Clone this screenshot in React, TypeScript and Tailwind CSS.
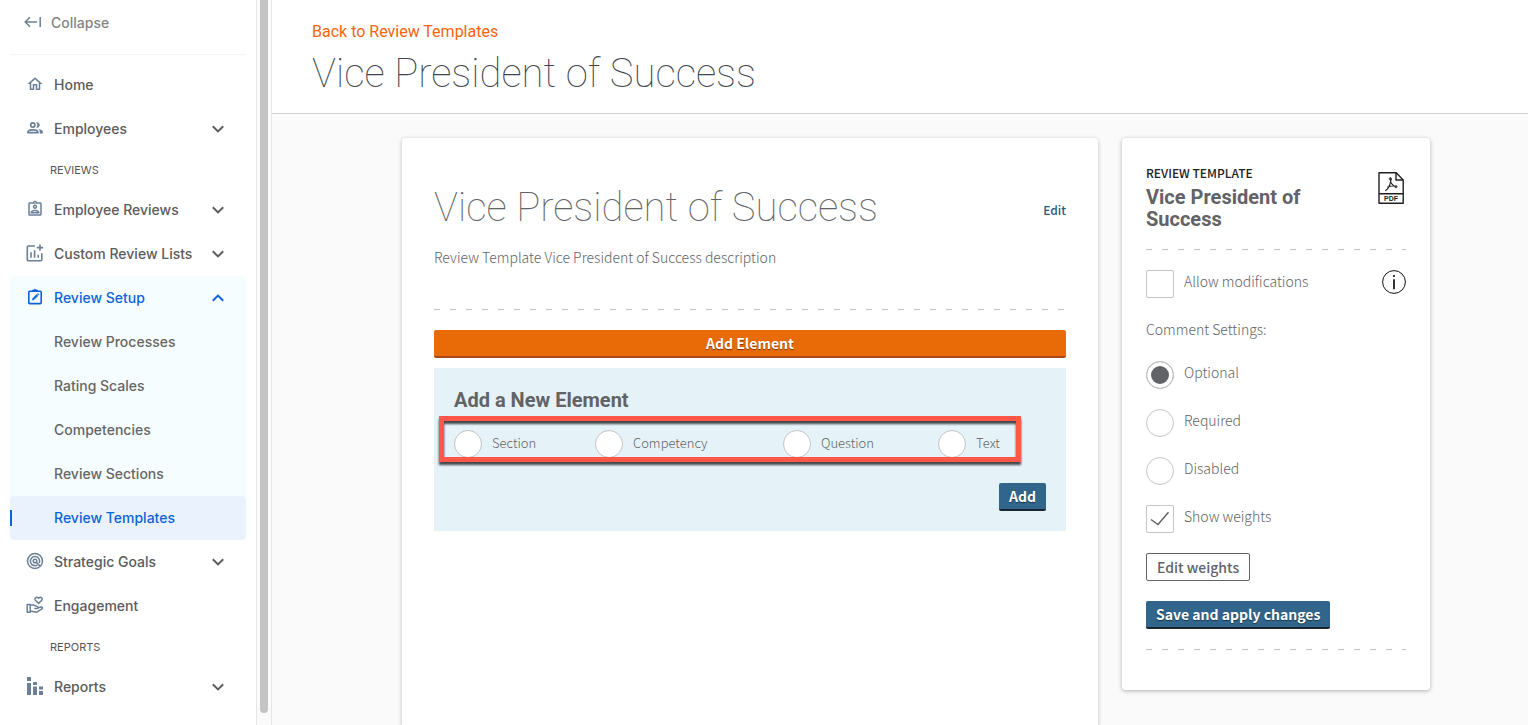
import { useState } from "react";
import type { ReactNode } from "react";
import { MdOutlineAssignmentInd, MdOutlineHome } from "react-icons/md";

const ELEMENT_TYPES = ["Section", "Competency", "Question", "Text"];
const COMMENT_SETTINGS = ["Optional", "Required", "Disabled"];
const SETUP_LINKS = [
  "Review Processes",
  "Rating Scales",
  "Competencies",
  "Review Sections",
  "Review Templates",
];

const CollapseIcon = () => (
  <svg width="18" height="12" viewBox="0 0 18 12" fill="none" stroke="currentColor" strokeWidth="1.5">
    <path d="M6 1.2 1.2 6 6 10.8M1.4 6H13M16.2 1v10" />
  </svg>
);

const PeopleIcon = () => (
  <svg width="18" height="18" viewBox="0 0 18 18" fill="none" stroke="currentColor" strokeWidth="1.7">
    <circle cx="6.800" cy="6" r="2.100" />
    <path d="M2 13.700v-.8c0-1.300 2.200-2.100 4.900-2.100s4.900.8 4.900 2.100v.8z" />
    <path
      d="M10 8.800a4 4 0 0 0 0-5.600c2.500-.4 3.700 1.200 3.700 2.800S12.500 9.200 10 8.800zM13.700 14.500v-1.800c0-1.200-.5-2.100-1.300-2.800 2.800.4 4.400 1.400 4.400 2.800v1.800z"
      fill="currentColor"
      stroke="none"
    />
  </svg>
);

const ChartPlusIcon = () => (
  <svg width="18" height="18" viewBox="0 0 18 18" fill="none" stroke="currentColor" strokeWidth="1.600">
    <path d="M9 2H2.300a1 1 0 0 0-1 1v12.700a1 1 0 0 0 1 1h12.500a1 1 0 0 0 1-1V9.200" />
    <path d="M14 .4v6.400M10.800 3.600h6.400M5 8.200v5.600M8.600 6.200v7.600M12.200 10.800v3" />
  </svg>
);

const ClipboardEditIcon = () => (
  <svg width="18" height="18" viewBox="0 0 18 18" fill="none" stroke="currentColor">
    <rect x="2.8" y="3.2" width="12.4" height="12.4" rx="0.8" strokeWidth="1.6" />
    <path d="M6.6 3V2h1.2a1.3 1.3 0 0 1 2.4 0h1.2v1" fill="currentColor" strokeWidth="0.8" />
    <path d="m6.4 12 .4-1.6 3.8-3.8 1.2 1.2L8 11.6z" fill="currentColor" strokeWidth="0.7" />
    <path d="m11.3 5.9.5-.5 1.2 1.2-.5.5z" fill="currentColor" strokeWidth="0.6" />
  </svg>
);

const TargetIcon = () => (
  <svg width="18" height="18" viewBox="0 0 18 18" fill="none" stroke="currentColor" strokeWidth="1.5">
    <circle cx="9" cy="9" r="7.5" />
    <path d="M11.4 13a4.6 4.6 0 1 1 1.8-2" />
    <circle cx="9" cy="9" r="1.8" />
    <path d="m10.3 10.3 3.6 3.6" />
  </svg>
);

const HandHeartIcon = () => (
  <svg width="18" height="18" viewBox="0 0 18 18" fill="none" stroke="currentColor" strokeWidth="1.5" strokeLinejoin="round">
    <path d="M12.6 7.4 9.6 4.5a1.7 1.7 0 0 1 0-2.6 1.9 1.9 0 0 1 2.7 0l.3.3.3-.3a1.9 1.9 0 0 1 2.7 0 1.7 1.7 0 0 1 0 2.6z" />
    <path d="M1.2 8.6h3v7.6h-3zM4.2 9h3.2l4.2 1.6c.8.4.6 1.9-.5 1.9H8.3" />
    <path d="M11.9 11.9 15 11c1.2-.2 2 1.2 1 1.9l-5.2 3.3-6.6-1.3" />
  </svg>
);

const StackedBarsIcon = () => (
  <svg width="18" height="18" viewBox="0 0 18 18" fill="currentColor">
    <path d="M1 0h4v4H1zM1 6h4v12H1zM7 5h4v3H7zM7 9.5h4V18H7zM13 9.5h4v3h-4zM13 14h4v4h-4z" />
  </svg>
);

const PdfIcon = () => (
  <svg width="26" height="32" viewBox="0 0 26 32" fill="none" stroke="#231f20" strokeWidth="1.4">
    <path d="M1 .8h17.2L25.2 8v23.2H1z" strokeLinejoin="round" />
    <path d="M18 1v7h7M1 21.8h24" />
    <path
      d="M12 6.200c1.500-.4 1.200 1.300.8 3-.8 3.600-3 8.400-5.600 9.600M12.400 7.500c-.2 3.200 2.400 6.800 6.300 7.200M9.300 15.200c2.600-1.200 5.600-1.600 9.200-.9"
      strokeWidth="1.100"
    />
    <circle cx="12.200" cy="6.800" r="1" strokeWidth="0.900" />
    <circle cx="18" cy="14.800" r="1" strokeWidth="0.900" />
    <text x="13" y="29.200" textAnchor="middle" fontFamily="Liberation Sans, sans-serif" fontSize="7" fontWeight="700" fill="#231f20" stroke="none">
      PDF
    </text>
  </svg>
);

const InfoIcon = () => (
  <svg width="24" height="24" viewBox="0 0 24 24" fill="none" stroke="#111" strokeWidth="1">
    <circle cx="12" cy="12" r="11.400" />
    <path d="M12 9.300v10" strokeWidth="1.700" />
    <circle cx="12" cy="6" r="1.100" fill="#111" stroke="none" />
  </svg>
);

const Chevron = ({ up = false }: { up?: boolean }) => (
  <svg width="12" height="8" viewBox="0 0 12 8" fill="none" stroke="currentColor" strokeWidth="2">
    <path d={up ? "M.8 6.800 6 1.600l5.200 5.200" : "M.8 1.200 6 6.400l5.200-5.200"} />
  </svg>
);

const Divider = () => (
  <div className="h-px bg-[repeating-linear-gradient(to_right,#c4c4c4_0_6px,transparent_6px_16px)]" />
);

interface NavItemProps {
  icon: ReactNode;
  label: string;
  expandable?: boolean;
  open?: boolean;
}

const NavItem = ({ icon, label, expandable, open }: NavItemProps) => {
  const rowClass = open
    ? "flex h-11 w-full items-center pl-4 pr-[22px] text-left text-[#0d62d6]"
    : "flex h-11 w-full items-center pl-4 pr-[22px] text-left text-[#5c5c5c]";
  const content = (
    <>
      <span className={open ? "flex w-7 pb-0.5" : "flex w-7 pb-0.5 text-[#6b7f96]"}>{icon}</span>
      <span className="flex-1 whitespace-nowrap pb-0.5">{label}</span>
      {expandable && <Chevron up={open} />}
    </>
  );
  if (expandable) {
    return (
      <button type="button" className={rowClass} aria-expanded={!!open}>
        {content}
      </button>
    );
  }
  return (
    <a href="#" className={rowClass}>
      {content}
    </a>
  );
};

const NavHeading = ({ children }: { children: ReactNode }) => (
  <h2 className="pl-10 pt-px text-[11px] font-normal leading-9 text-[#555]">{children}</h2>
);

const Sidebar = () => (
  <aside className="flex w-68 shrink-0 bg-white font-[Inter,sans-serif] text-[14px] font-medium">
    <nav className="flex-1 px-[10px]">
      <button type="button" className="flex h-[46px] items-center gap-[9px] pl-3.5 pb-0.5 text-[#858585]">
        <span className="text-[#6b7f96]">
          <CollapseIcon />
        </span>
        Collapse
      </button>
      <div className="mt-2 mb-2 h-px bg-[#f3f3f3]" />
      <NavItem icon={<MdOutlineHome size={18} />} label="Home" />
      <NavItem icon={<PeopleIcon />} label="Employees" expandable />
      <NavHeading>REVIEWS</NavHeading>
      <NavItem icon={<MdOutlineAssignmentInd size={18} />} label="Employee Reviews" expandable />
      <NavItem icon={<ChartPlusIcon />} label="Custom Review Lists" expandable />
      <div className="rounded bg-[#f5fdff]">
        <NavItem icon={<ClipboardEditIcon />} label="Review Setup" expandable open />
        {SETUP_LINKS.map((link) => (
          <a
            key={link}
            href="#"
            className={
              link === "Review Templates"
                ? "flex h-11 items-center rounded bg-[#eaf2fd] text-[#0d62d6]"
                : "flex h-11 items-center text-[#666]"
            }
          >
            <span
              className={link === "Review Templates" ? "mr-[42px] h-4 w-0.5 bg-[#0d62d6]" : "w-11"}
            />
            <span className="pb-0.5">{link}</span>
          </a>
        ))}
      </div>
      <NavItem icon={<TargetIcon />} label="Strategic Goals" expandable />
      <NavItem icon={<HandHeartIcon />} label="Engagement" />
      <NavHeading>REPORTS</NavHeading>
      <NavItem icon={<StackedBarsIcon />} label="Reports" expandable />
    </nav>
    <div className="w-4 border-x border-[#e6e6e6] bg-[#fafafa] px-[3px] pb-3">
      <div className="h-full rounded-b-full bg-[#c4c4c4]" />
    </div>
  </aside>
);

interface ChoiceProps {
  name: string;
  label: string;
  checked: boolean;
  onChange: () => void;
}

const Radio = ({ name, label, checked, onChange }: ChoiceProps) => (
  <label className="flex items-start gap-[10px]">
    <input
      type="radio"
      name={name}
      checked={checked}
      onChange={onChange}
      className="size-7 shrink-0 appearance-none rounded-full border border-[#c4c4c4] bg-white shadow-[inset_0_0_0_4px_white] checked:bg-[#626366]"
    />
    {label}
  </label>
);

const Checkbox = ({ name, label, checked, onChange }: ChoiceProps) => (
  <label className="flex items-start gap-[10px]">
    <span className="grid size-7 shrink-0">
      <input
        type="checkbox"
        name={name}
        checked={checked}
        onChange={onChange}
        className="col-start-1 row-start-1 appearance-none rounded-xs border border-[#c4c4c4] bg-white"
      />
      {checked && (
        <svg
          className="pointer-events-none col-start-1 row-start-1"
          viewBox="0 0 28 28"
          fill="none"
          stroke="#626366"
          strokeWidth="1.500"
        >
          <path d="m5 14.500 7 5L22.500 7.200" />
        </svg>
      )}
    </span>
    {label}
  </label>
);

const TemplateEditor = () => {
  const [elementType, setElementType] = useState("");

  return (
    <section className="min-w-0 flex-1 rounded-t bg-white px-8 pt-[46px] shadow-[0_1px_4px_rgba(0,0,0,0.25)]">
      <div className="flex items-center justify-between">
        <h2 className="font-[Roboto,sans-serif] text-[40px] font-thin leading-12">
          Vice President of Success
        </h2>
        <a href="#" className="mt-1 text-xs font-medium text-[#2b5a80]">
          Edit
        </a>
      </div>
      <p className="mt-[13px] mb-10 leading-6">Review Template Vice President of Success description</p>
      <Divider />
      <button
        type="button"
        className="mt-5 h-7 w-full rounded-xs border-b-2 border-[#ab481c] bg-[#e96b07] font-bold text-white text-shadow-[0_1px_1px_rgba(0,0,0,0.5)]"
      >
        Add Element
      </button>
      <form className="mt-[10px] bg-[#e5f2f8] p-5" onSubmit={(e) => e.preventDefault()}>
        <h3 className="font-[Roboto,sans-serif] text-xl font-bold leading-6">Add a New Element</h3>
        <div className="relative mt-[18px] grid grid-cols-[141px_188px_155px_auto] text-[13px] leading-[26px]">
          {ELEMENT_TYPES.map((type) => (
            <Radio
              key={type}
              name="elementType"
              label={type}
              checked={elementType === type}
              onChange={() => setElementType(type)}
            />
          ))}
          <div className="pointer-events-none absolute -top-[14px] -left-[15px] h-[46px] w-[582px] border-5 border-[#ff574a] drop-shadow-[0_3px_1px_rgba(0,0,0,0.7)]" />
        </div>
        <div className="mt-[25px] flex justify-end">
          <button
            type="submit"
            className="h-7 rounded-xs border-b-2 border-[#1a2530] bg-[#32658b] px-[10px] font-bold text-white text-shadow-[0_1px_1px_rgba(0,0,0,0.5)]"
          >
            Add
          </button>
        </div>
      </form>
    </section>
  );
};

const TemplateSettings = () => {
  const [comments, setComments] = useState("Optional");
  const [allowModifications, setAllowModifications] = useState(false);
  const [showWeights, setShowWeights] = useState(true);

  return (
    <section className="w-77 shrink-0 rounded bg-white px-6 pt-6 pb-10 shadow-[0_1px_4px_rgba(0,0,0,0.3)]">
      <div className="flex justify-between">
        <div className="w-48">
          <p className="pb-0.5 text-xs font-medium leading-[22px] text-[#222]">REVIEW TEMPLATE</p>
          <h2 className="font-[Roboto,sans-serif] text-xl font-bold leading-[22px]">
            Vice President of Success
          </h2>
        </div>
        <a href="#" aria-label="Download PDF" className="mt-[10px] mr-0.5">
          <PdfIcon />
        </a>
      </div>
      <div className="mt-[19px] flex flex-col items-stretch gap-5 leading-[22px]">
        <Divider />
        <div className="flex items-start justify-between">
          <Checkbox
            name="allowModifications"
            label="Allow modifications"
            checked={allowModifications}
            onChange={() => setAllowModifications(!allowModifications)}
          />
          <button type="button" aria-label="More information">
            <InfoIcon />
          </button>
        </div>
        <p className="leading-[23px]">Comment Settings:</p>
        {COMMENT_SETTINGS.map((setting) => (
          <Radio
            key={setting}
            name="comments"
            label={setting}
            checked={comments === setting}
            onChange={() => setComments(setting)}
          />
        ))}
        <Checkbox
          name="showWeights"
          label="Show weights"
          checked={showWeights}
          onChange={() => setShowWeights(!showWeights)}
        />
        <button
          type="button"
          className="h-7 self-start rounded-xs border border-[#626366] px-[10px] font-medium"
        >
          Edit weights
        </button>
        <button
          type="button"
          className="h-7 self-start rounded-xs border-b-2 border-[#1a2530] bg-[#32658b] px-[10px] font-bold text-white text-shadow-[0_1px_1px_rgba(0,0,0,0.5)]"
        >
          Save and apply changes
        </button>
        <Divider />
      </div>
    </section>
  );
};

const App = () => (
  <div className="flex h-screen overflow-hidden bg-[#fafafa] font-['Noto_Sans_CJK_SC',sans-serif] text-[14px] font-light text-[#626366]">
    <Sidebar />
    <main className="flex min-w-0 flex-1 flex-col">
      <header className="border-b border-[#d0d2d2] bg-white px-10 pt-5 pb-[15px] font-[Roboto,sans-serif]">
        <a href="#" className="block text-base font-normal leading-6 text-[#f9640b]">
          Back to Review Templates
        </a>
        <h1 className="mt-1.5 text-[40px] font-thin leading-12 text-[#3f444d]">
          Vice President of Success
        </h1>
      </header>
      <div className="flex flex-1 items-start gap-6 pt-6 pr-[98px] pl-[130px]">
        <div className="flex min-w-0 flex-1 self-stretch">
          <TemplateEditor />
        </div>
        <TemplateSettings />
      </div>
    </main>
  </div>
);

export default App;
